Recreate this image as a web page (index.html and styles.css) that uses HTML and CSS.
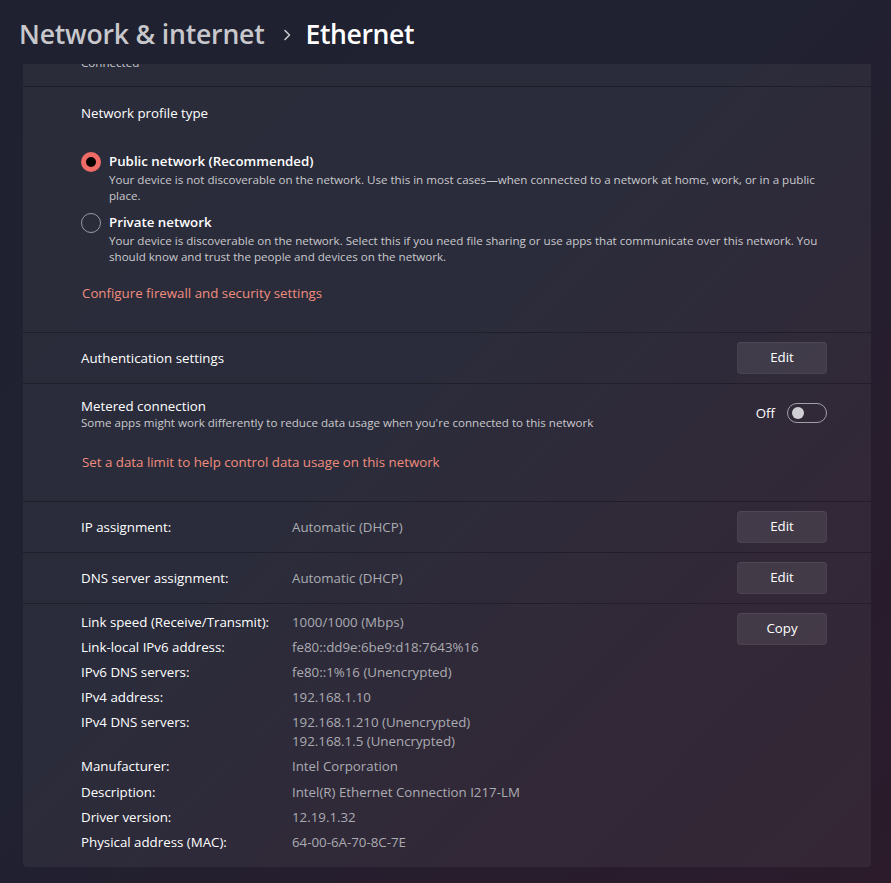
FILE: index.html
```html
<!DOCTYPE html>
<html lang="en">
<head>
<meta charset="utf-8">
<title>Network &amp; internet › Ethernet</title>
<link rel="stylesheet" href="styles.css">
</head>
<body>
<header class="header">
  <h1 class="crumbs">
    <span class="crumb-parent">Network &amp; internet</span>
    <svg class="chev" width="8" height="12" viewBox="0 0 8 12"><path d="M2 1.5 L6.5 6 L2 10.5" fill="none" stroke="#c8c8cc" stroke-width="1.6" stroke-linecap="round" stroke-linejoin="round"/></svg>
    <span class="crumb-current">Ethernet</span>
  </h1>
</header>
<main class="viewport">
  <section class="card">
    <div class="row row-top">
      <div class="desc">Connected</div>
    </div>

    <div class="row section profile">
      <div class="label">Network profile type</div>
      <div class="radios">
        <div class="radio-item">
          <span class="radio checked"></span>
          <div class="stack">
            <div class="radio-title">Public network (Recommended)</div>
            <div class="desc">Your device is not discoverable on the network. Use this in most cases—when connected to a network at home, work, or in a public<br>place.</div>
          </div>
        </div>
        <div class="radio-item">
          <span class="radio"></span>
          <div class="stack">
            <div class="radio-title">Private network</div>
            <div class="desc">Your device is discoverable on the network. Select this if you need file sharing or use apps that communicate over this network. You<br>should know and trust the people and devices on the network.</div>
          </div>
        </div>
      </div>
      <a class="link link-fw" href="#">Configure firewall and security settings</a>
    </div>

    <div class="row line">
      <div class="label">Authentication settings</div>
      <button class="btn">Edit</button>
    </div>

    <div class="row section metered">
      <div class="metered-head">
        <div class="stack">
          <div class="label tight">Metered connection</div>
          <div class="desc">Some apps might work differently to reduce data usage when you're connected to this network</div>
        </div>
        <div class="toggle-wrap">
          <span class="toggle-text">Off</span>
          <span class="toggle"><span class="knob"></span></span>
        </div>
      </div>
      <a class="link link-data" href="#">Set a data limit to help control data usage on this network</a>
    </div>

    <div class="row line">
      <div class="kv">
        <span class="label">IP assignment:</span>
        <span class="value">Automatic (DHCP)</span>
      </div>
      <button class="btn">Edit</button>
    </div>

    <div class="row line">
      <div class="kv">
        <span class="label">DNS server assignment:</span>
        <span class="value">Automatic (DHCP)</span>
      </div>
      <button class="btn">Edit</button>
    </div>

    <div class="row details">
      <dl class="props">
        <dt>Link speed (Receive/Transmit):</dt><dd>1000/1000 (Mbps)</dd>
        <dt>Link-local IPv6 address:</dt><dd>fe80::dd9e:6be9:d18:7643%16</dd>
        <dt>IPv6 DNS servers:</dt><dd>fe80::1%16 (Unencrypted)</dd>
        <dt>IPv4 address:</dt><dd>192.168.1.10</dd>
        <dt>IPv4 DNS servers:</dt><dd>192.168.1.210 (Unencrypted)<br>192.168.1.5 (Unencrypted)</dd>
        <dt>Manufacturer:</dt><dd>Intel Corporation</dd>
        <dt>Description:</dt><dd>Intel(R) Ethernet Connection I217-LM</dd>
        <dt>Driver version:</dt><dd>12.19.1.32</dd>
        <dt>Physical address (MAC):</dt><dd>64-00-6A-70-8C-7E</dd>
      </dl>
      <button class="btn btn-copy">Copy</button>
    </div>
  </section>
</main>
</body>
</html>
```
FILE: styles.css
```css
* { box-sizing: border-box; }

html, body {
  margin: 0;
  height: 100%;
}

body {
  width: 891px;
  height: 883px;
  overflow: hidden;
  background: linear-gradient(135deg, #1f2130 0%, #202131 45%, #271d2d 75%, #2b1b2b 100%);
  font-family: "Open Sans", "Noto Sans", sans-serif;
  font-size: 13.3px;
  color: #ffffff;
  display: flex;
  flex-direction: column;
}

.header {
  height: 64px;
  flex: none;
  padding-left: 19px;
  padding-top: 3px;
  display: flex;
  align-items: center;
  position: relative;
  z-index: 2;
}

.crumbs {
  margin: 0;
  display: flex;
  align-items: center;
  font-size: 26.6px;
  font-weight: 600;
  line-height: 36px;
  letter-spacing: -0.2px;
}

.crumb-parent { color: #c8c8cc; }
.chev { margin: 2px 15px 0 18px; }
.crumb-current { color: #ffffff; letter-spacing: -0.4px; }

.viewport {
  flex: 1;
  overflow: hidden;
  padding: 0 20px 0 23px;
}

.card {
  margin-top: -44px;
  background: rgba(255, 255, 255, 0.05);
  border-radius: 4px;
}

.row {
  padding: 0 44px 0 58px;
  border-top: 1px solid rgba(0, 0, 0, 0.28);
}

.row-top {
  border-top: none;
  height: 66px;
  padding-top: 35px;
}

.stack { display: flex; flex-direction: column; }

.label {
  color: #ffffff;
  line-height: 20px;
}

.label.tight { line-height: 18px; }

.desc {
  font-size: 11.6px;
  line-height: 16px;
  color: #c9c9cd;
}

.section { display: flex; flex-direction: column; align-items: flex-start; }

.profile {
  padding-top: 16px;
  padding-bottom: 29px;
}

.radios {
  margin-top: 28px;
  display: flex;
  flex-direction: column;
  gap: 8px;
}

.radio-item {
  display: flex;
  gap: 8px;
  align-items: flex-start;
}

.radio {
  flex: none;
  width: 20px;
  height: 20px;
  margin-top: 1px;
  border-radius: 50%;
  border: 1px solid #9b9ba2;
}

.radio.checked {
  border: 5px solid #ef6b66;
  background: #000000;
}

.radio-title {
  font-weight: 600;
  line-height: 21px;
  color: #ffffff;
}

.link {
  color: #ef8c7e;
  text-decoration: none;
  line-height: 20px;
  padding-left: 1px;
}

.link-fw { margin-top: 18px; }

.line {
  height: 51px;
  display: flex;
  align-items: center;
  justify-content: space-between;
}

.btn {
  width: 90px;
  height: 32px;
  border: 1px solid rgba(255, 255, 255, 0.04);
  border-top-color: rgba(255, 255, 255, 0.07);
  border-radius: 4px;
  background: rgba(255, 255, 255, 0.085);
  color: #ffffff;
  font-family: inherit;
  font-size: 13.3px;
  padding: 0 0 2px;
}

.metered {
  padding-top: 13px;
  padding-bottom: 29px;
}

.metered-head {
  width: 100%;
  display: flex;
  justify-content: space-between;
  align-items: flex-start;
}

.toggle-wrap {
  display: flex;
  align-items: center;
  gap: 12px;
  margin-top: 6px;
}

.toggle-text { line-height: 20px; color: #ffffff; }

.toggle {
  width: 40px;
  height: 20px;
  border: 1px solid #a0a0a6;
  border-radius: 10px;
  display: flex;
  align-items: center;
  padding-left: 4px;
}

.knob {
  width: 12px;
  height: 12px;
  border-radius: 50%;
  background: #d0d0d4;
}

.link-data { margin-top: 21px; }

.kv {
  display: flex;
  align-items: center;
  flex: 1;
}

.kv .label { width: 211px; flex: none; }

.value { color: #abacb2; line-height: 20px; }

.details {
  display: flex;
  justify-content: space-between;
  align-items: flex-start;
  padding-top: 9px;
  padding-bottom: 15px;
}

.props {
  margin: 0;
  display: grid;
  grid-template-columns: 211px auto;
  row-gap: 6.1px;
  line-height: 19px;
}

.props dt { color: #ffffff; }
.props dd { margin: 0; color: #abacb2; }

.btn-copy { margin-top: 0; }
```
